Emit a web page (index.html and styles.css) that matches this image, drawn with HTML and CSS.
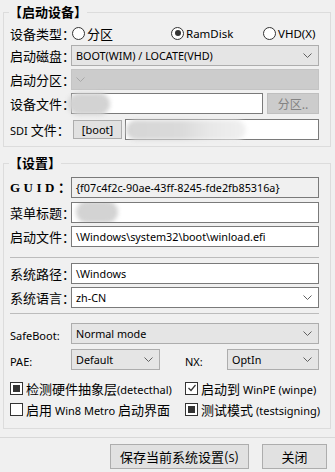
FILE: index.html
```html
<!DOCTYPE html>
<html lang="zh-CN">
<head>
  <meta charset="UTF-8">
  <meta name="viewport" content="width=device-width, initial-scale=1.0">
  <title>启动设置</title>
  <link rel="stylesheet" href="styles.css">
</head>
<body>
  <div class="dialog">
    <fieldset class="group group-device">
      <legend>【启动设备】</legend>
      <div class="row row-radio">
        <span class="label">设备类型：</span>
        <label class="radio radio-part"><span class="circle"></span>分区</label>
        <label class="radio radio-ram"><span class="circle checked"></span>RamDisk</label>
        <label class="radio radio-vhd"><span class="circle"></span>VHD(X)</label>
      </div>
      <div class="row gap-2">
        <span class="label">启动磁盘：</span>
        <div class="field combo">BOOT(WIM) / LOCATE(VHD)
          <svg class="arrow" width="9" height="5" viewBox="0 0 9 5"><polyline points="0.5,0.5 4.5,4.5 8.5,0.5" /></svg>
        </div>
      </div>
      <div class="row gap-3">
        <span class="label">启动分区：</span>
        <div class="field combo disabled">
          <svg class="arrow" width="9" height="5" viewBox="0 0 9 5"><polyline points="0.5,0.5 4.5,4.5 8.5,0.5" /></svg>
        </div>
      </div>
      <div class="row gap-3">
        <span class="label">设备文件：</span>
        <div class="field field-file"><span class="blur blur-file"></span></div>
        <button class="btn btn-part" disabled>分区..</button>
      </div>
      <div class="row gap-5">
        <span class="label"><span class="en">SDI</span> 文件：</span>
        <button class="btn btn-boot">[boot]</button>
        <div class="field field-sdi"><span class="blur blur-sdi"></span></div>
      </div>
    </fieldset>

    <fieldset class="group group-settings">
      <legend>【设置】</legend>
      <div class="row">
        <span class="label label-guid">GUID：</span>
        <div class="field readonly">{f07c4f2c-90ae-43ff-8245-fde2fb85316a}</div>
      </div>
      <div class="row gap-4">
        <span class="label">菜单标题：</span>
        <div class="field"><span class="blur blur-title"></span></div>
      </div>
      <div class="row gap-3">
        <span class="label">启动文件：</span>
        <div class="field">\Windows\system32\boot\winload.efi</div>
      </div>
      <div class="sep sep-1"></div>
      <div class="row gap-5">
        <span class="label">系统路径：</span>
        <div class="field">\Windows</div>
      </div>
      <div class="row gap-3">
        <span class="label">系统语言：</span>
        <div class="field combo editable">zh-CN
          <svg class="arrow" width="9" height="5" viewBox="0 0 9 5"><polyline points="0.5,0.5 4.5,4.5 8.5,0.5" /></svg>
        </div>
      </div>
      <div class="sep sep-2"></div>
      <div class="row row-safe">
        <span class="label label-small">SafeBoot:</span>
        <div class="field combo">Normal mode
          <svg class="arrow" width="9" height="5" viewBox="0 0 9 5"><polyline points="0.5,0.5 4.5,4.5 8.5,0.5" /></svg>
        </div>
      </div>
      <div class="row gap-5">
        <span class="label label-small">PAE:</span>
        <div class="field combo combo-pae">Default
          <svg class="arrow" width="9" height="5" viewBox="0 0 9 5"><polyline points="0.5,0.5 4.5,4.5 8.5,0.5" /></svg>
        </div>
        <span class="label label-small label-nx">NX:</span>
        <div class="field combo">OptIn
          <svg class="arrow" width="9" height="5" viewBox="0 0 9 5"><polyline points="0.5,0.5 4.5,4.5 8.5,0.5" /></svg>
        </div>
      </div>
      <div class="check-row check-row-1">
        <label class="check col-left"><span class="box filled"></span><span class="check-text">检测硬件抽象层<span class="en">(detecthal)</span></span></label>
        <label class="check"><span class="box ticked">
          <svg width="10" height="10" viewBox="0 0 10 10"><polyline points="1.5,5 4,7.5 8.5,2" /></svg>
        </span><span class="check-text">启动到 <span class="en">WinPE (winpe)</span></span></label>
      </div>
      <div class="check-row check-row-2">
        <label class="check col-left"><span class="box"></span><span class="check-text">启用 <span class="en">Win8 Metro</span> 启动界面</span></label>
        <label class="check"><span class="box filled"></span><span class="check-text">测试模式 <span class="en">(testsigning)</span></span></label>
      </div>
    </fieldset>

    <div class="bottom-line"></div>
    <div class="button-container">
      <button class="btn btn-save">保存当前系统设置(<span class="en">S</span>)</button>
      <button class="btn btn-close">关闭</button>
    </div>
  </div>
</body>
</html>
```

FILE: styles.css
```css
body {
  margin: 0;
  padding: 0;
  background-color: #f0f0f0;
  font-family: "Noto Sans CJK SC", sans-serif;
  font-size: 13px;
  color: #000;
}

.dialog {
  width: 335px;
  height: 472px;
  padding-top: 4px;
  box-sizing: border-box;
  overflow: hidden;
}

.group {
  box-sizing: border-box;
  width: 328px;
  margin: 0 0 0 3px;
  padding: 3px 11px 6px 6px;
  border: 1px solid #dcdcdc;
  min-width: 0;
}

.group legend {
  font-weight: bold;
  font-size: 13px;
  line-height: 16px;
  padding: 0;
  margin-left: -1px;
}

.group-settings {
  margin-top: 8px;
  padding-top: 6px;
  padding-bottom: 11px;
}

.row {
  display: flex;
  align-items: center;
  height: 21px;
}

.gap-2 { margin-top: 2px; }
.gap-3 { margin-top: 3px; }
.gap-4 { margin-top: 4px; }
.gap-5 { margin-top: 5px; }

.label {
  width: 61px;
  flex: none;
  white-space: nowrap;
  line-height: 21px;
}

.label-guid {
  font-family: "Liberation Serif", "Noto Sans CJK SC", serif;
  font-weight: bold;
  font-size: 13px;
  letter-spacing: 3.5px;
}

.label-small {
  font-family: "Noto Sans", sans-serif;
  font-size: 11px;
  padding-top: 4px;
}

.label-nx {
  width: 42px;
  margin-left: 25px;
}

/* radios */
.row-radio {
  height: 20px;
}

.radio {
  display: flex;
  align-items: center;
  flex: none;
  white-space: nowrap;
}

.radio-part { width: 99px; }
.radio-ram { width: 92px; font-family: "Noto Sans", sans-serif; font-size: 11.5px; }
.radio-vhd { font-family: "Noto Sans", sans-serif; font-size: 11.5px; }

.circle {
  width: 11px;
  height: 11px;
  border: 1px solid #333;
  border-radius: 50%;
  background: #fff;
  margin: 0 2px 0 1px;
  position: relative;
  flex: none;
}

.circle.checked::after {
  content: "";
  position: absolute;
  left: 2.5px;
  top: 2.5px;
  width: 6px;
  height: 6px;
  border-radius: 50%;
  background: #333;
}

/* text boxes and combos */
.field {
  position: relative;
  flex: 1;
  height: 21px;
  box-sizing: border-box;
  border: 1px solid #7a7a7a;
  background: #fff;
  padding: 0 4px;
  display: flex;
  align-items: center;
  font-family: "Noto Sans", sans-serif;
  font-size: 10.8px;
  white-space: nowrap;
  overflow: hidden;
}

.readonly {
  background: #f0f0f0;
}

.combo {
  background: #e5e5e5;
  border-color: #adadad;
  justify-content: space-between;
}

.combo.editable {
  background: #fff;
  border-color: #7a7a7a;
}

.combo.disabled {
  background: #cccccc;
  border-color: #c4c4c4;
}

.combo-pae {
  flex: none;
  width: 89px;
}

.arrow {
  flex: none;
  margin-right: 2px;
  fill: none;
  stroke: #606060;
  stroke-width: 1;
}

.disabled .arrow {
  stroke: #a8a8a8;
}

.field-file {
  overflow: visible;
}

.field-sdi {
  overflow: visible;
  margin-left: 3px;
}

/* blurred-out values */
.blur {
  position: absolute;
  filter: blur(2px);
  border-radius: 11px;
}

.blur-file {
  left: -4px;
  top: -1px;
  width: 42px;
  height: 22px;
  background: #d3d3d3;
}

.blur-sdi {
  left: 0;
  top: 0;
  width: 120px;
  height: 20px;
  background: linear-gradient(90deg, #d6d6d6 0%, #dadada 45%, #e8e8e8 70%, #f0f0f0 100%);
}

.blur-title {
  left: 4px;
  top: -2px;
  width: 42px;
  height: 22px;
  background: #d3d3d3;
}

/* buttons */
.btn {
  font-family: "Noto Sans CJK SC", sans-serif;
  font-size: 13px;
  background: #e1e1e1;
  border: 1px solid #adadad;
  padding: 0;
  color: #000;
  box-sizing: border-box;
}

.btn-part {
  width: 52px;
  height: 21px;
  margin-left: 4px;
  flex: none;
  background: #cccccc;
  border-color: #bfbfbf;
  color: #838383;
  font-size: 12px;
}

.btn-boot {
  width: 49px;
  height: 19px;
  margin-left: 2px;
  flex: none;
  font-family: "Noto Sans", sans-serif;
  font-size: 11px;
}

/* separators */
.sep {
  height: 1px;
  background: #bcbcbc;
  margin-top: 10px;
}

.sep-2 {
  margin-top: 5px;
}

.sep-1 + .row {
  margin-top: 5px;
}

.row-safe {
  margin-top: 9px;
}

/* check boxes */
.check-row {
  display: flex;
  height: 16px;
  align-items: center;
  margin-top: 10px;
}

.check-row-2 {
  margin-top: 5px;
}

.check {
  display: flex;
  align-items: center;
  white-space: nowrap;
}

.col-left {
  width: 175px;
  flex: none;
}

.box {
  width: 11px;
  height: 11px;
  border: 1px solid #333;
  background: #fff;
  margin-right: 3px;
  position: relative;
  flex: none;
}

.box.filled::after {
  content: "";
  position: absolute;
  left: 2px;
  top: 2px;
  width: 7px;
  height: 7px;
  background: #333;
}

.box svg {
  position: absolute;
  left: 0.5px;
  top: 0.5px;
  fill: none;
  stroke: #333;
  stroke-width: 1.2;
}

.en {
  font-family: "Noto Sans", sans-serif;
  font-size: 11px;
}

/* bottom buttons */
.bottom-line {
  height: 1px;
  background: #d8d8d8;
  margin-top: 8px;
}

.button-container {
  display: flex;
  justify-content: flex-end;
  gap: 13px;
  padding-right: 8px;
  margin-top: 6px;
}

.btn-save {
  width: 139px;
  height: 25px;
}

.btn-close {
  width: 65px;
  height: 25px;
}
```
